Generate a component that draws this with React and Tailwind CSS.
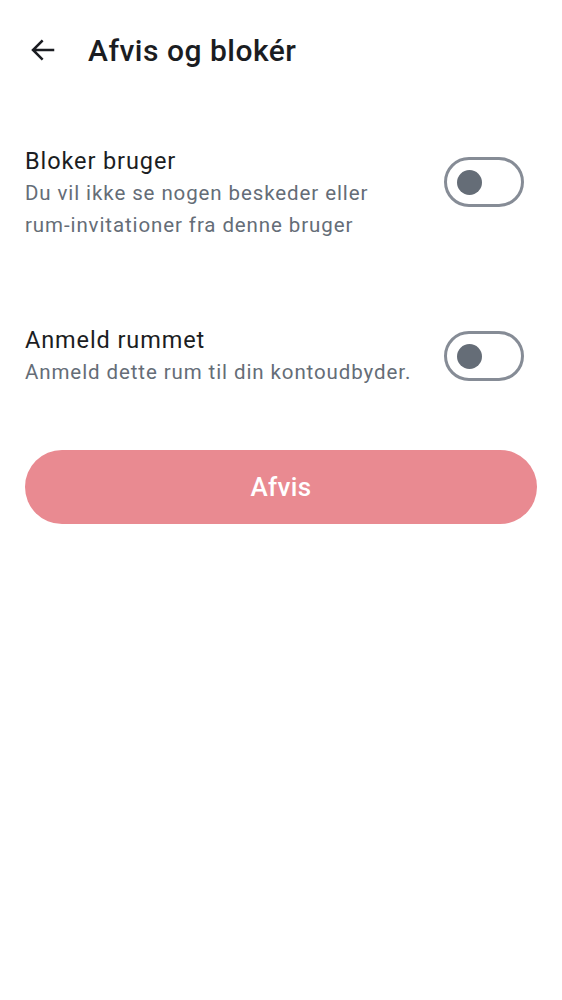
import React from "react";

const Toggle = ({ className = "" }) => (
  <div className={`w-[80px] h-[50px] rounded-full border-[3px] border-[#868c96] flex items-center px-[10px] shrink-0 ${className}`}>
    <div className="w-[25px] h-[25px] rounded-full bg-[#656d77]" />
  </div>
);

const Row = ({ title, text, toggleClass }) => (
  <div className="flex items-start gap-4 pr-[13px]">
    <div className="flex-1">
      <div className="text-[23.5px] leading-[30px] tracking-[0.9px] text-[#1b1d22]">{title}</div>
      <div className="text-[20.5px] leading-[32px] mt-[1px] tracking-[0.9px] text-[#656d77]">{text}</div>
    </div>
    <Toggle className={toggleClass} />
  </div>
);

export default function App() {
  return (
    <div className="min-h-[1000px] bg-white" style={{ fontFamily: "Roboto, 'Noto Sans', sans-serif" }}>
      <div className="h-[100px] flex items-center px-[28px] gap-[30px]">
        <svg width="30" height="30" viewBox="0 0 24 24" fill="none" stroke="#1b1d22" strokeWidth="2" strokeLinecap="square">
          <path d="M20 12H5M11 5l-7 7 7 7" />
        </svg>
        <div className="text-[30px] font-medium tracking-[0.5px] text-[#1b1d22]">Afvis og blokér</div>
      </div>
      <div className="px-[25px] pt-[46px]">
        <Row toggleClass="mt-[11px]" title="Bloker bruger" text={<>Du vil ikke se nogen beskeder eller<br />rum-invitationer fra denne bruger</>} />
        <div className="h-[84px]" />
        <Row toggleClass="mt-[6px]" title="Anmeld rummet" text="Anmeld dette rum til din kontoudbyder." />
        <button className="mt-[62px] w-full h-[74px] rounded-full bg-[#e98a91] text-white text-[26px] font-medium tracking-[0.3px]">
          Afvis
        </button>
      </div>
    </div>
  );
}
